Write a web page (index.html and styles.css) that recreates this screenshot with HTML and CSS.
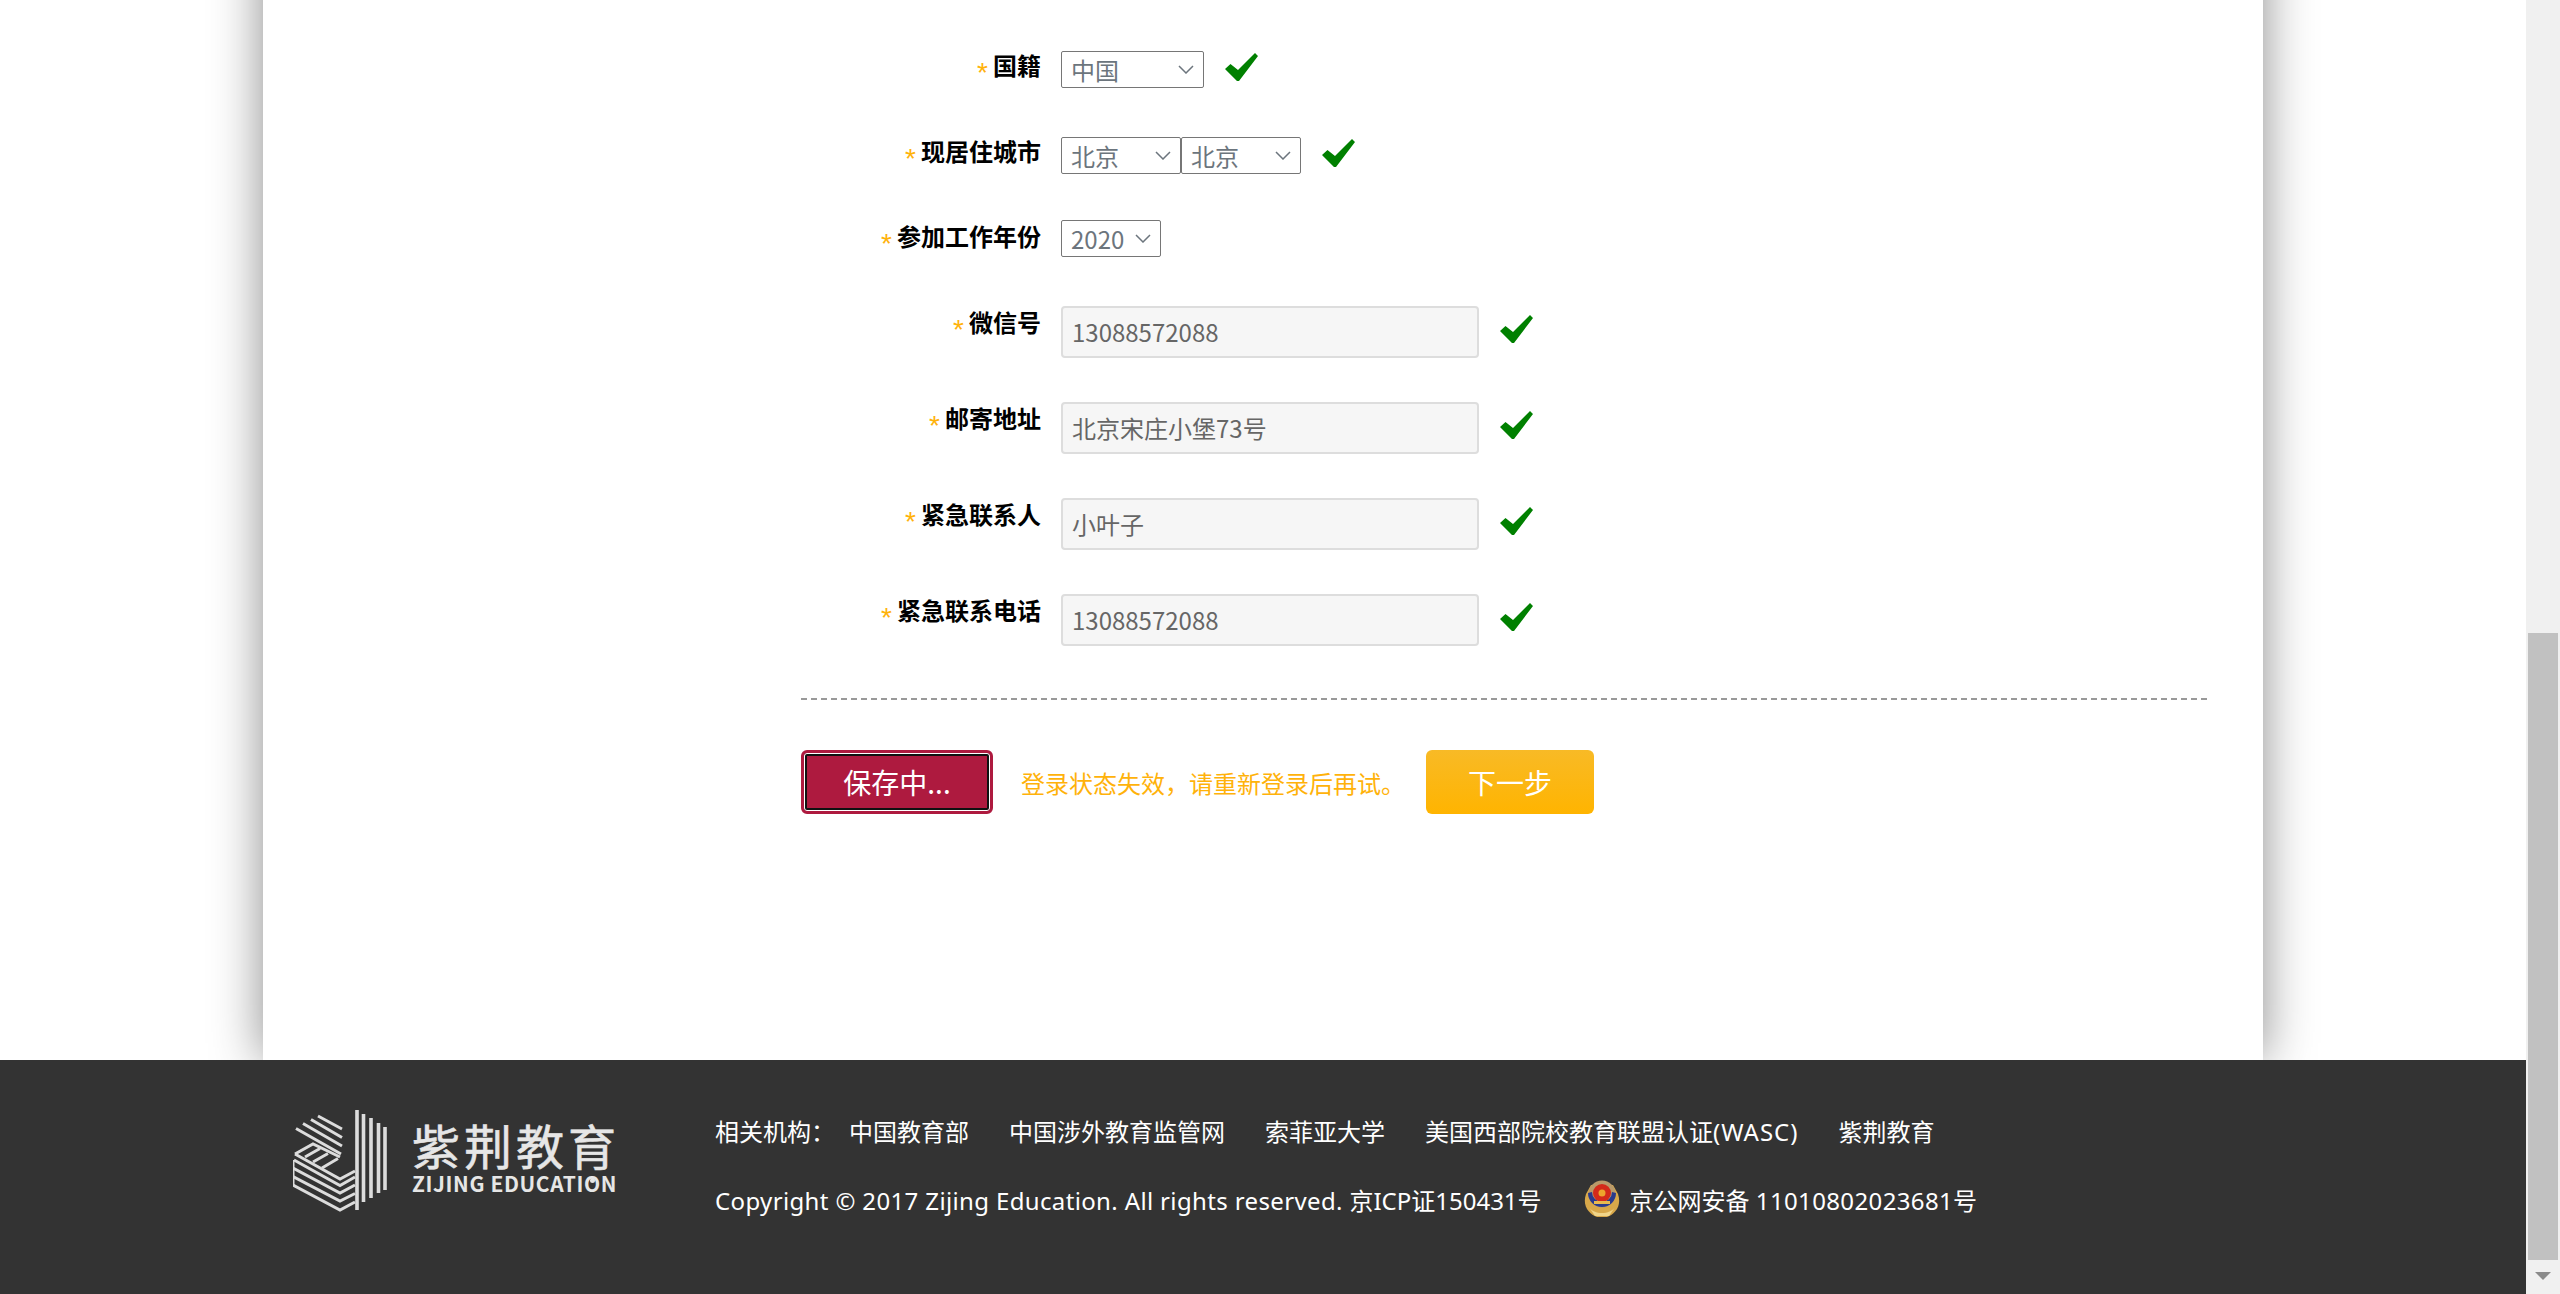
FILE: index.html
```html
<!DOCTYPE html>
<html lang="zh-CN">
<head>
    <meta charset="UTF-8">
    <title>紫荆教育</title>
    <link rel="stylesheet" href="styles.css">
</head>
<body>
    <svg class="defs">
        <symbol id="check" viewBox="0 0 33 28">
            <polygon points="0,16 5.5,11 13,17 30,0 33,3 14,28 12,28" fill="#008000"/>
        </symbol>
    </svg>
    <div class="layout">
        <div class="page">
            <div class="card">
                <form class="form">
                    <div class="row row-select">
                        <label class="label label-up"><span class="star">*</span>国籍</label>
                        <select class="select select-country"><option>中国</option></select>
                        <svg class="check check-select"><use href="#check"/></svg>
                    </div>
                    <div class="row row-city">
                        <label class="label label-up"><span class="star">*</span>现居住城市</label>
                        <select class="select select-city"><option>北京</option></select>
                        <select class="select select-city"><option>北京</option></select>
                        <svg class="check check-select"><use href="#check"/></svg>
                    </div>
                    <div class="row row-select">
                        <label class="label"><span class="star">*</span>参加工作年份</label>
                        <select class="select select-year"><option>2020</option></select>
                    </div>
                    <div class="row row-input">
                        <label class="label"><span class="star">*</span>微信号</label>
                        <input class="input" type="text" value="13088572088">
                        <svg class="check check-input"><use href="#check"/></svg>
                    </div>
                    <div class="row row-input">
                        <label class="label"><span class="star">*</span>邮寄地址</label>
                        <input class="input" type="text" value="北京宋庄小堡73号">
                        <svg class="check check-input"><use href="#check"/></svg>
                    </div>
                    <div class="row row-input">
                        <label class="label"><span class="star">*</span>紧急联系人</label>
                        <input class="input" type="text" value="小叶子">
                        <svg class="check check-input"><use href="#check"/></svg>
                    </div>
                    <div class="row row-input row-last">
                        <label class="label"><span class="star">*</span>紧急联系电话</label>
                        <input class="input" type="text" value="13088572088">
                        <svg class="check check-input"><use href="#check"/></svg>
                    </div>
                    <div class="actions">
                        <button class="btn btn-save" type="button">保存中...</button>
                        <span class="message">登录状态失效，请重新登录后再试。</span>
                        <button class="btn btn-next" type="button">下一步</button>
                    </div>
                </form>
            </div>
            <div class="footer">
                <div class="logo">
                    <svg class="logo-mark" viewBox="0 0 94 104" fill="none" stroke="#dcdcdc" stroke-width="3">
                        <path d="M25 6 L49 19 M18 9.5 L49 27.5 M10 13.5 L49 36 M3 18.5 L48 44"/>
                        <path d="M2 44 L20 34 L47 47"/>
                        <path d="M12 47 L27 38.5 M20 52 L35 43.5 M29 58 L45 48.5"/>
                        <path d="M2 44 L47 69 L62 61 M1 50 L47 75.5 L62 67 M0 58 L47 83 L62 75 M0 66.5 L47 91 L62 83.5 M0 75 L47 100 L62 92"/>
                        <path d="M0 50 V75"/>
                        <path stroke-width="3.6" d="M64 0 V100 M70.5 4 V92 M78 8 V88 M85.5 13 V83 M92 17 V80"/>
                    </svg>
                    <div class="logo-text">
                        <div class="logo-cn">紫荆教育</div>
                        <div class="logo-en">ZIJING EDUCATI<span class="logo-o">O</span>N</div>
                    </div>
                </div>
                <div class="footer-info">
                    <div class="links">
                        <span class="links-title">相关机构：</span>
                        <a class="link">中国教育部</a>
                        <a class="link">中国涉外教育监管网</a>
                        <a class="link">索菲亚大学</a>
                        <a class="link">美国西部院校教育联盟认证<span class="wasc">(WASC)</span></a>
                        <a class="link">紫荆教育</a>
                    </div>
                    <div class="copyright">
                        <span><span class="latin">Copyright © 2017 Zijing Education. All rights reserved. </span>京ICP证150431号</span>
                        <svg class="emblem" viewBox="0 0 38 38">
                            <path d="M3 14 C-1 26 6 34 14 37 H24 C32 34 39 26 35 14 L30 5 H8 Z" fill="#d8a84a"/>
                            <path d="M6 27 C11 35 27 35 32 27 L26 36 H12 Z" fill="#f0d58a"/>
                            <circle cx="19" cy="14" r="13.5" fill="#b99a6a"/>
                            <path d="M5 13 A14 14 0 0 0 33 13 L29 12 A10 10 0 0 1 9 12 Z" fill="#2a3a8c"/>
                            <circle cx="19" cy="13" r="9" fill="#d42a1a"/>
                            <circle cx="19" cy="13" r="3.5" fill="#eda52c"/>
                            <rect x="11" y="21" width="16" height="3" fill="#e8b94e"/>
                        </svg>
                        <span>京公网安备 <span class="latin">11010802023681</span>号</span>
                    </div>
                </div>
            </div>
        </div>
        <div class="scrollbar">
            <div class="scroll-thumb"></div>
            <div class="scroll-arrow"></div>
        </div>
    </div>
</body>
</html>
```

FILE: styles.css
```css
/* page frame */
html, body {
    margin: 0;
    padding: 0;
    height: 1294px;
    overflow: hidden;
}
body {
    font-family: "Noto Sans CJK SC", "Noto Sans", sans-serif;
    font-size: 24px;
    background-color: #fff;
}
.defs {
    display: none;
}
.layout {
    display: flex;
    height: 1294px;
}
.page {
    flex: 1;
    display: flex;
    flex-direction: column;
    overflow: hidden;
}

/* white card */
.card {
    box-sizing: border-box;
    width: 2000px;
    height: 1160px;
    margin: -100px 0 0 263px;
    padding: 151px 56px 0 538px;
    background-color: #fff;
    box-shadow: 0 0 48px rgba(0, 0, 0, 0.46);
    flex-shrink: 0;
}

/* form rows */
.row {
    display: flex;
    align-items: flex-start;
}
.row-select {
    height: 86px;
}
.row-city {
    height: 83px;
}
.row-input {
    height: 96px;
}
.row-last {
    height: 104px;
    border-bottom: 2px dashed #999;
    margin-bottom: 50px;
}
.label {
    box-sizing: border-box;
    width: 240px;
    margin-right: 20px;
    margin-top: -1px;
    height: 34px;
    line-height: 34px;
    text-align: right;
    font-weight: 700;
    color: #000;
}
.label-up {
    margin-top: -3px;
}
.star {
    display: inline-block;
    vertical-align: -7px;
    margin-right: 5px;
    line-height: 20px;
    font-family: "Liberation Sans", sans-serif;
    font-weight: 400;
    font-size: 28px;
    color: #ffb20a;
}
.select {
    box-sizing: border-box;
    height: 37px;
    padding: 0 0 0 9px;
    border: 1px solid #767676;
    border-radius: 2px;
    appearance: none;
    background-color: #fff;
    background-image: url("data:image/svg+xml,%3Csvg xmlns='http://www.w3.org/2000/svg' width='16' height='9'%3E%3Cpath d='M1 1l7 7 7-7' fill='none' stroke='%236c757d' stroke-width='1.5'/%3E%3C/svg%3E");
    background-repeat: no-repeat;
    background-position: right 9px top 13px;
    font-family: inherit;
    font-size: 24px;
    line-height: 35px;
    color: #6c757d;
}
.select-country {
    width: 143px;
}
.select-city {
    width: 120px;
}
.select-year {
    width: 100px;
}
.check {
    width: 33px;
    height: 28px;
}
.check-select {
    margin: 2px 0 0 21px;
}
.check-input {
    margin: 9px 0 0 21px;
}
.input {
    box-sizing: border-box;
    width: 418px;
    height: 52px;
    padding: 0 9px 2px;
    border: 2px solid #ddd;
    border-radius: 4px;
    background-color: #f6f6f6;
    font-family: inherit;
    font-size: 24px;
    color: #666;
}

/* buttons */
.actions {
    display: flex;
    align-items: center;
}
.btn {
    box-sizing: border-box;
    height: 64px;
    border-radius: 6px;
    font-family: inherit;
    font-size: 28px;
    color: #fff;
    padding: 0;
    cursor: pointer;
}
.btn-save {
    width: 192px;
    border: 3px solid #ae1a3f;
    background-color: #ae1a3f;
    box-shadow: inset 0 0 0 1px #fff, inset 0 0 0 3px #111;
}
.message {
    margin: 0 28px;
    width: 377px;
    white-space: nowrap;
    color: #ffb20a;
}
.btn-next {
    width: 168px;
    border: none;
    background: linear-gradient(#f8ba26, #ffb400);
}

/* footer */
.footer {
    position: relative;
    flex: 1;
    display: flex;
    background-color: #333;
    color: #fff;
    padding: 49px 0 0 293px;
}
.logo {
    display: flex;
    width: 422px;
    height: 110px;
    margin-top: 1px;
}
.logo-mark {
    width: 94px;
    height: 104px;
    margin-right: 25px;
    filter: blur(0.4px);
}
.logo-text {
    width: 204px;
    color: #e6e6e6;
    margin-top: 8px;
}
.logo-cn {
    font-size: 48px;
    line-height: 52px;
    letter-spacing: 4px;
    white-space: nowrap;
    -webkit-text-stroke: 0.6px #e6e6e6;
}
.logo-en {
    font-size: 21px;
    line-height: 26px;
    font-weight: 700;
    letter-spacing: 0.6px;
    white-space: nowrap;
}
.logo-o {
    position: relative;
}
.logo-o::after {
    content: "";
    position: absolute;
    left: 6px;
    top: 10px;
    width: 5px;
    height: 5px;
    border-radius: 50%;
    background-color: #e6e6e6;
}
.footer-info {
    font-family: "Noto Sans", "Noto Sans CJK SC", sans-serif;
}
.latin {
    letter-spacing: 0.36px;
}
.wasc {
    letter-spacing: 1px;
}
.links {
    display: flex;
    height: 46px;
    line-height: 46px;
}
.links-title {
    margin-right: 14px;
}
.link {
    margin-right: 40px;
}
.copyright {
    display: flex;
    align-items: center;
    height: 46px;
    margin-top: 21px;
}
.emblem {
    width: 38px;
    height: 38px;
    margin: 0 9px 0 41px;
    filter: blur(0.4px);
}

/* scrollbar */
.scrollbar {
    width: 34px;
    height: 1294px;
    background-color: #f0f0f0;
    box-sizing: border-box;
    padding: 633px 2px 0;
}
.scroll-thumb {
    height: 627px;
    background-color: #c1c1c1;
}
.scroll-arrow {
    width: 0;
    height: 0;
    margin: 12px auto 0;
    border-left: 8px solid transparent;
    border-right: 8px solid transparent;
    border-top: 8px solid #8a8a8a;
}
```
